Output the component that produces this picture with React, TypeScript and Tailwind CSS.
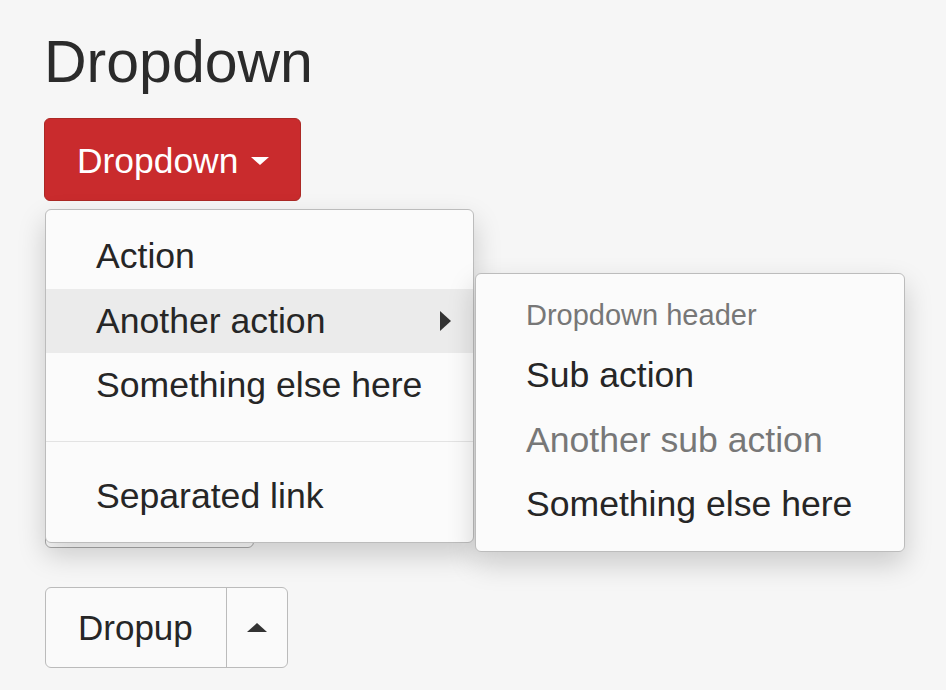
export default function App() {
  const item = "px-[50px] py-[7px] text-[35.6px] leading-[50.5px] whitespace-nowrap";

  return (
    <div className="min-h-[690px] bg-[#f6f6f6] pl-[44px] pt-[33px] font-['Liberation_Sans',Arial,sans-serif] text-[#262626]">
      <h1 className="text-[59px] leading-[58px] font-normal text-[#2b2b2b]">Dropdown</h1>

      <div className="relative mt-[27px] w-fit">
        <button className="flex h-[83px] items-center gap-[13px] rounded-[6px] border border-[#ac2925] bg-[#c92b2d] pl-[32px] pr-[31px] pt-[2px] text-[35.4px] leading-[50px] text-white">
          Dropdown
          <span className="h-0 w-0 border-x-[9px] border-t-[8px] border-x-transparent border-t-white" />
        </button>

        <div className="absolute left-[1px] top-[91px] z-10 w-[429px] rounded-[6px] border border-[#bcbcbc] bg-[#fbfbfb] py-[14px] shadow-[0_12px_28px_rgba(0,0,0,0.18)]">
          <div className={item}>Action</div>
          <div className={`${item} flex items-center justify-between bg-[#ebebeb] pr-[22px]`}>
            Another action
            <span className="h-0 w-0 border-y-[10px] border-l-[11px] border-y-transparent border-l-[#333]" />
          </div>
          <div className={item}>Something else here</div>
          <div className="mb-[22px] mt-[23px] h-px bg-[#e3e3e3]" />
          <div className={item}>Separated link</div>

          <div className="absolute left-[429px] top-[63px] w-[430px] rounded-[6px] border border-[#bcbcbc] bg-[#fbfbfb] py-[14px] shadow-[0_12px_28px_rgba(0,0,0,0.18)]">
            <div className="px-[50px] pb-[7.5px] pt-[6.5px] text-[29px] leading-[41px] text-[#777]">Dropdown header</div>
            <div className={item}>Sub action</div>
            <div className={`${item} text-[#777]`}>Another sub action</div>
            <div className={item}>Something else here</div>
          </div>
        </div>
      </div>

      <div className="ml-[1px] mt-[264px] h-[83px] w-[209px] rounded-[6px] border border-[#aaa] bg-white" />

      <div className="ml-[1px] mt-[39px] flex h-[81px] w-fit rounded-[6px] border border-[#bbb] bg-[#fafafa]">
        <div className="pl-[32px] pr-[33px] pt-[15px] text-[35px] leading-[50px]">Dropup</div>
        <div className="flex w-[61px] items-center justify-center border-l border-[#bbb]">
          <span className="h-0 w-0 border-x-[10px] border-b-[9px] border-x-transparent border-b-[#333]" />
        </div>
      </div>
    </div>
  );
}
